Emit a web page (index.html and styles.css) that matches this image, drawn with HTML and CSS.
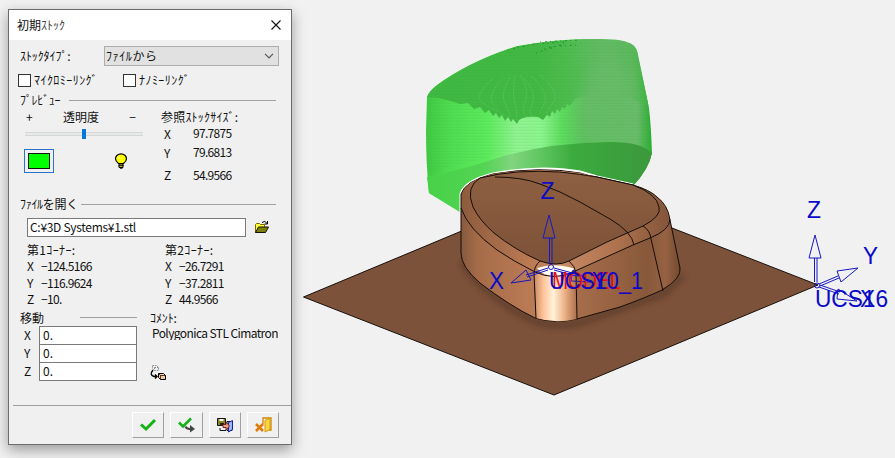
FILE: index.html
```html
<!DOCTYPE html>
<html lang="ja">
<head>
<meta charset="utf-8">
<title>初期ｽﾄｯｸ</title>
<link rel="stylesheet" href="styles.css">
</head>
<body>
<main class="workspace">
  <section class="dialog">
    <header class="titlebar">
      <h1 class="title">初期<span class="title-kana">ｽﾄｯｸ</span></h1>
      <svg class="close" viewBox="0 0 10 10"><path d="M0.5.5l9 9M9.5.5l-9 9"/></svg>
    </header>

    <div class="type-row">
      <label class="type-label">ｽﾄｯｸﾀｲﾌﾟ:</label>
      <div class="select"><span>ﾌｧｲﾙから</span>
        <svg class="chevron" viewBox="0 0 10 6"><path d="M1 .8l4 4 4-4"/></svg>
      </div>
    </div>
    <div class="check-row">
      <label class="check check-micro"><i class="box"></i><span>ﾏｲｸﾛﾐｰﾘﾝｸﾞ</span></label>
      <label class="check"><i class="box"></i><span>ﾅﾉﾐｰﾘﾝｸﾞ</span></label>
    </div>

    <div class="group-head head-preview"><span class="tight">ﾌﾟﾚﾋﾞｭｰ</span><hr></div>
    <div class="preview">
      <div class="preview-left">
        <div class="opacity-row"><span>+</span><span>透明度</span><span>−</span></div>
        <div class="slider"><i class="thumb"></i></div>
        <div class="preview-tools">
          <div class="swatch"><i></i></div>
          <svg class="bulb" viewBox="0 0 14 16">
            <path d="M4.5 10.5C2.500 9 1.500 7.500 1.500 5.800a5.500 5 0 0 1 11 0c0 1.700-1 3.200-3 4.700z" fill="#ff0" stroke="#000" stroke-width="1.200"/>
            <path d="M5 11h4v3.500H5z" fill="#e8e85a" stroke="#000"/><path d="M4.500 12.700h5M6 15.200h2.500" stroke="#000"/><path d="M4 5.500l1.500-2" stroke="#fff"/>
          </svg>
        </div>
      </div>
      <div class="preview-right">
        <div class="size-title">参照ｽﾄｯｸｻｲｽﾞ:</div>
        <div class="size"><b>X</b><span>97.7875</span></div>
        <div class="size"><b>Y</b><span>79.6813</span></div>
        <div class="size"><b>Z</b><span>54.9566</span></div>
      </div>
    </div>

    <div class="group-head head-file"><span>ﾌｧｲﾙを開く</span><hr></div>
    <div class="file-row">
      <div class="field path">C:¥3D Systems¥1.stl</div>
      <svg class="folder" viewBox="0 0 16 14">
        <path d="M8 2.500q3-2.500 5 .8M13.500 1v3h-3" fill="none" stroke="#000"/>
        <path d="M1.500 12.500V4.500l1-1h3l1 1h4v3" fill="#ffff38" stroke="#806000"/>
        <path d="M1.500 12.500l3-5.500h10l-3 5.500z" fill="#808000" stroke="#111"/>
      </svg>
    </div>
    <div class="corners">
      <div class="corner">
        <div class="corner-title">第1ｺｰﾅｰ:</div>
        <div class="coord"><b>X</b><span>−124.5166</span></div>
        <div class="coord"><b>Y</b><span>−116.9624</span></div>
        <div class="coord"><b>Z</b><span>−10.</span></div>
      </div>
      <div class="corner">
        <div class="corner-title">第2ｺｰﾅｰ:</div>
        <div class="coord"><b>X</b><span>−26.7291</span></div>
        <div class="coord"><b>Y</b><span>−37.2811</span></div>
        <div class="coord"><b>Z</b><span>44.9566</span></div>
      </div>
    </div>

    <div class="move">
      <div class="move-left">
        <div class="group-head head-move"><span>移動</span><hr></div>
        <div class="axis"><b>X</b><div class="field">0.</div></div>
        <div class="axis"><b>Y</b><div class="field">0.</div></div>
        <div class="axis"><b>Z</b><div class="field">0.</div></div>
      </div>
      <div class="comment">
        <div class="comment-title">ｺﾒﾝﾄ:</div>
        <div class="comment-text">Polygonica STL Cimatron</div>
        <svg class="transfer" viewBox="0 0 17 17">
          <path d="M2.500 1.500h4l2 2v3h-4l-2-2zM4.500 3.500h4M4.500 3.500v3" fill="none" stroke="#888" stroke-dasharray="1.500 1"/>
          <path d="M3 6Q-1 11 4 12.500h3M5 10.500l2 2-2 2" fill="none" stroke="#000" stroke-width="1.400"/>
          <path d="M8.500 9.500h5l2 2v4h-5l-2-2z" fill="#f4c9a0" stroke="#000"/><path d="M8.500 9.500l2 2h5M10.500 11.500v4" fill="none" stroke="#000" stroke-width=".7"/>
        </svg>
      </div>
    </div>

    <footer class="actions">
      <div class="btn"><svg viewBox="0 0 20 16"><path d="M3 7.500l5 4.500 9-9" fill="none" stroke="#12b312" stroke-width="3"/></svg></div>
      <div class="btn"><svg viewBox="0 0 20 16"><path d="M3 5.500l4 4L15 1.500" fill="none" stroke="#16b01c" stroke-width="2.600"/><path d="M9.500 9.500q1 3 6 2.500" fill="none" stroke="#444" stroke-width="2.200"/><path d="M14 8l5 4-5 3.500z" fill="#444"/></svg></div>
      <div class="btn"><svg viewBox="0 0 20 16">
        <path d="M2.500 1.500h8v7h-8z" fill="#8a8520" stroke="#111"/><path d="M4.500 2h4v2h-4z" fill="#fff"/><path d="M5 6h4v3H5z" fill="#222"/>
        <path d="M12 4.500h5v9h-5z" fill="#fff" stroke="#111"/><path d="M13.500 5.500l4-2v9l-4 2.500z" fill="#9ab4ff" stroke="#1720a0"/>
        <path d="M5 11v2.500h6" fill="none" stroke="#111"/><path d="M8 7.500h3V5l3.500 4-3.500 4v-2.500H8z" fill="#f0a080" stroke="#722"/>
      </svg></div>
      <div class="btn"><svg viewBox="0 0 20 16">
        <path d="M10 7V1h8v12h-2" fill="none" stroke="#d08400" stroke-width="1.300"/><path d="M12 3.500l5-2.300v11.300L12 15z" fill="#ffd53b" stroke="#d59a10"/>
        <path d="M3 7l7 7M10 7l-7 7" stroke="#e07a08" stroke-width="2.600"/>
      </svg></div>
    </footer>
  </section>

  <svg class="scene" viewBox="292 0 603 458">
    <defs>
      <linearGradient id="green" gradientUnits="userSpaceOnUse" x1="427" y1="0" x2="652" y2="0">
        <stop offset="0" stop-color="#40c943"/><stop offset=".1" stop-color="#50dc50"/><stop offset=".27" stop-color="#5deb5d"/><stop offset=".4" stop-color="#91f491"/><stop offset=".51" stop-color="#8cf58c"/><stop offset=".6" stop-color="#5edc5f"/><stop offset=".7" stop-color="#5cc45c"/><stop offset=".93" stop-color="#6cbc6c"/><stop offset="1" stop-color="#2aae30"/>
      </linearGradient>
      <linearGradient id="greenTop" gradientUnits="userSpaceOnUse" x1="427" y1="90" x2="650" y2="80">
        <stop offset="0" stop-color="#3fb941"/><stop offset=".5" stop-color="#43b843"/><stop offset=".65" stop-color="#4fbd50"/><stop offset=".8" stop-color="#66bb66"/><stop offset=".93" stop-color="#5cb95d"/><stop offset="1" stop-color="#35b73a"/>
      </linearGradient>
      <linearGradient id="greenBase" gradientUnits="userSpaceOnUse" x1="427" y1="0" x2="652" y2="0">
        <stop offset="0" stop-color="#48d148"/><stop offset=".25" stop-color="#53d453"/><stop offset=".38" stop-color="#80d47e"/><stop offset=".5" stop-color="#61c761"/><stop offset=".65" stop-color="#3bab3e"/><stop offset="1" stop-color="#3c983c"/>
      </linearGradient>
      <linearGradient id="side" gradientUnits="userSpaceOnUse" x1="461" y1="0" x2="681" y2="0">
        <stop offset="0" stop-color="#87593e"/><stop offset=".08" stop-color="#a66c49"/><stop offset=".33" stop-color="#bb7b55"/><stop offset=".53" stop-color="#a66d4a"/><stop offset=".85" stop-color="#88583b"/><stop offset=".93" stop-color="#966243"/><stop offset="1" stop-color="#70482f"/>
      </linearGradient>
      <linearGradient id="front" gradientUnits="userSpaceOnUse" x1="534" y1="0" x2="577" y2="0">
        <stop offset="0" stop-color="#c98961"/><stop offset=".22" stop-color="#ffc39a"/><stop offset=".45" stop-color="#fff2d8"/><stop offset=".7" stop-color="#f0b48b"/><stop offset="1" stop-color="#a96e4b"/>
      </linearGradient>
      <linearGradient id="lid" x1="0" y1="0" x2="0" y2="1"><stop offset="0" stop-color="#8e5f42"/><stop offset="1" stop-color="#7d5238"/></linearGradient>
      <linearGradient id="rim" gradientUnits="userSpaceOnUse" x1="461" y1="0" x2="670" y2="0"><stop offset="0" stop-color="#8c5b3d"/><stop offset=".35" stop-color="#bd7c55"/><stop offset=".5" stop-color="#c58a65"/><stop offset=".75" stop-color="#ad724d"/><stop offset="1" stop-color="#82543a"/></linearGradient>
      <pattern id="weave" width="3" height="3" patternUnits="userSpaceOnUse"><path d="M0 1.500q1.500-1 3 0" fill="none" stroke="#22922b" stroke-width=".5" opacity=".22"/></pattern>
      <filter id="soft" x="-20%" y="-20%" width="140%" height="140%"><feGaussianBlur stdDeviation="3"/></filter>
      <filter id="softer" x="-40%" y="-40%" width="180%" height="180%"><feGaussianBlur stdDeviation="7"/></filter>
      <clipPath id="stockClip"><path d="M427 97Q429 91 437 85Q470 61 517 46Q560 38 600 39Q625 39 633 45Q637 48 638 55L649 108Q651 125 652 153Q649 169 633 186L600 200 460 212 429 193Q426 165 426 130z"/></clipPath>
    </defs>

    <!-- Transparent stock preview -->
    <path fill="url(#green)" d="M427 97Q429 91 437 85Q470 61 517 46Q560 38 600 39Q625 39 633 45Q637 48 638 55L649 108Q651 125 652 153Q649 169 633 186L600 200 460 212 429 193Q426 165 426 130z"/>
    <g clip-path="url(#stockClip)">
      <path fill="url(#greenTop)" d="M427 97Q429 91 437 85Q470 61 517 46Q560 38 600 39Q625 39 633 45Q637 48 638 55L649 106Q620 90 604 105Q590 92 575 99L570 106 567 104 565 109 562 107 560 112 557 109 555 114 552 111 550 117 547 115 543 120 538 117Q525 116 519 120L517 124 513 119 511 122 508 117 505 121 502 115 499 118 496 113 493 116 489 110 485 113 480 107 474 109 468 103 460 104Q440 97 427 97z"/>
      <path fill="#69bc69" opacity=".85" filter="url(#softer)" d="M596 65Q622 50 632 80L638 139Q620 136 583 141Q570 113 596 65z"/>
      <path fill="url(#weave)" d="M427 97Q470 61 517 46L600 39 633 45 649 108Q650 130 652 145 630 140 600 142 500 150 428 174z"/>
    </g>
    <path fill="url(#greenBase)" d="M427 177Q470 168 503 156Q550 143 607 142Q640 141 652 153Q649 169 633 186L600 200 460 212 429 193z"/>
    <g class="contours">
      <path d="M520 75q10 15 5 27t5 16M524 79q13 13 8 26t6 13M515 76q-3 15 0 27t1 17M510 78q-10 15-5 25t5 15M502 79q-13 15-10 23t14 14M493 79q-14 12-14 18t18 14M531 76q16 14 14 25l-6 14M540 75q17 14 15 25l-9 13"/>
    </g>
    <path class="speckles" d="M508 50l26-6 30-2M536 53l22-7 20-1M544 49l20-5M540 42l40-2"/>

    <!-- Base plate and model -->
    <path class="plate" d="M303.500 297L567 187 818 285 554 395z"/>
    <path d="M462 262Q481 294 536 322Q558 328 580 323L663 294 683 276" fill="none" stroke="#3e281b" stroke-width="5" opacity=".55" filter="url(#soft)"/>
    <path class="halo" d="M461 212V194Q465 181 493 174Q540 165 580 172L597 177 633 185"/>
    <path id="body" fill="url(#side)" stroke="#150d08" d="M461 207V194Q465 181 493 174Q540 166 580 173Q589 176 597 177L633 185Q650 190 657 197Q668 205 670 220L680 268Q682 278 662 290Q645 298 620 307L577 319Q555 324 535 318Q510 306 480 283Q461 267 461 253z"/>
    <path fill="url(#rim)" d="M462 206V194Q465 181 493 174Q540 167 580 173L633 186Q665 196 669 219Q668 230 650 238L633 245 573 272Q555 281 535 272Q511 260 497 250Q468 230 462 206z"/>
    <path fill="url(#front)" d="M535 272Q555 279 576 272L577 319Q555 324 536 318z"/>
    <path fill="#fffdf1" d="M537 268Q555 262 575 269Q566 276 555 276Q543 276 537 268z"/>
    <path fill="url(#lid)" stroke="#150d08" d="M480 178Q465 187 473 207Q480 221 494 233Q515 250 540 261Q557 267 569 261L607 242 643 226Q662 216 659 207Q657 194 633 185L597 177Q580 174 560 172Q515 169 480 178z"/>
    <g class="edges">
      <path d="M461 208Q468 229 497 250Q513 261 535 272Q555 281 573 272L633 245 650 238Q670 230 670 219"/>
      <path d="M495 177Q522 177 540 184Q560 191 580 202L610 219Q632 232 634 245M643 226Q650 230 651 239L663 291M540 261Q534 266 534 274L536 318M569 261Q575 266 576 273L577 319"/>
    </g>

    <!-- Coordinate systems -->
    <g class="axes">
      <circle cx="551" cy="267" r="2.500"/>
      <path d="M549.500 264V238M552 264V238M543 238h12l-6-23zM548 268l-22 7M548 270l-21 7M511 283l15-13 5 10zM554 268l22 6M554 270l22 6M573 270l18 12-20-1z"/>
      <circle cx="817" cy="285.500" r="2.500"/>
      <path d="M814.500 282V258M817 282V258M809 258h12l-6-23zM819 284l19-8M820 286l19-8M837 271l21-3-17 14zM819 287l20 7M820 285l20 7M838 289l19 12-20-2z"/>
    </g>
    <g class="marks">
      <text x="540.500" y="199" textLength="14" lengthAdjust="spacingAndGlyphs">Z</text>
      <text x="489" y="289" textLength="15" lengthAdjust="spacingAndGlyphs">X</text>
      <text class="model-mark" x="552" y="289" textLength="79" lengthAdjust="spacingAndGlyphs">MODEL_</text>
      <text x="549" y="289" textLength="94" lengthAdjust="spacingAndGlyphs">UCS10_1</text>
      <text x="592" y="289" textLength="15" lengthAdjust="spacingAndGlyphs">Y</text>
      <text x="807" y="218" textLength="14" lengthAdjust="spacingAndGlyphs">Z</text>
      <text x="863" y="264" textLength="15" lengthAdjust="spacingAndGlyphs">Y</text>
      <text x="815" y="307" textLength="73" lengthAdjust="spacingAndGlyphs">UCS16</text>
      <text x="860" y="307" textLength="15" lengthAdjust="spacingAndGlyphs">X</text>
    </g>
  </svg>
</main>
</body>
</html>
```
FILE: styles.css
```css
* { box-sizing: border-box; }
body { margin: 0; background: #f1f1f1; font: 12px/16px "Noto Sans CJK JP", sans-serif; color: #111; overflow: hidden; }
.workspace { display: flex; width: 895px; height: 458px; }
.dialog { flex: none; z-index: 1; margin: 9px 0 0 8px; width: 284px; height: 436px; border: 1px solid #6c6c6c; background: #f0f0f0; box-shadow: 0 5px 13px rgba(0,0,0,.36); white-space: nowrap; }
.scene { flex: none; width: 603px; height: 458px; display: block; }

.titlebar { display: flex; justify-content: space-between; align-items: center; height: 30px; background: #fff; padding: 0 10px 0 8px; }
.title { margin: 0; font-size: 12px; font-weight: 400; }
.title-kana { color: #444; }
.close { width: 10px; height: 10px; }
.close path { stroke: #111; stroke-width: 1.1; }

.type-row { display: flex; align-items: center; height: 20px; margin: 6px 12px 0 11px; }
.type-label { width: 84px; letter-spacing: -.1px; }
.select { display: flex; align-items: center; justify-content: space-between; width: 175px; height: 20px; padding: 0 4px 0 1px; border: 1px solid #adadad; background: #e1e1e1; letter-spacing: .6px; }
.chevron { width: 10px; height: 6px; }
.chevron path { fill: none; stroke: #555; stroke-width: 1.2; }

.check-row { display: flex; height: 16px; margin: 6px 0 0 9px; letter-spacing: .45px; }
.check { display: flex; align-items: center; gap: 3px; }
.check-micro { width: 105px; }
.box { width: 13px; height: 13px; border: 1px solid #333; background: #fff; }

.group-head { display: flex; align-items: center; height: 16px; }
.group-head hr { flex: 1; height: 1px; margin: 0; border: 0; background: #a0a0a0; }
.head-preview { margin: 4px 15px 0 11px; gap: 9px; }
.tight { letter-spacing: -.4px; }

.preview { display: flex; margin-top: 1px; height: 87px; }
.preview-left { width: 118px; margin-left: 16px; }
.opacity-row { display: flex; justify-content: space-between; padding: 0 7px 0 1px; height: 16px; }
.slider { display: flex; align-items: center; justify-content: center; height: 10px; margin-top: 4px; background: linear-gradient(#d6d6d6 1px, #e7eaea 1px 3px, #d6d6d6 3px) center / 100% 4px no-repeat; }
.thumb { width: 4px; height: 10px; background: #0078d7; }
.preview-tools { display: flex; align-items: center; justify-content: space-between; margin: 10px 15px 0 -1px; height: 24px; }
.swatch { width: 30px; height: 24px; padding: 3px; border: 1px solid #2874c7; }
.swatch i { display: block; width: 22px; height: 16px; background: #0f0; border: 1px solid #111; }
.bulb { width: 14px; height: 16px; fill: none; }
.preview-right { margin-left: 18px; }
.size-title { height: 16px; letter-spacing: .2px; }
.size { display: flex; height: 22px; align-items: center; padding-left: 3px; }
.size:nth-child(2) { height: 16px; }
.size:nth-child(4) { height: 23px; }
.size b { width: 29px; font-weight: 400; padding-top: 1px; }
.size span { letter-spacing: -.7px; }

.head-file { margin: 0 15px 0 11px; gap: 3px; }
.head-file span { letter-spacing: -.3px; }
.file-row { display: flex; align-items: center; height: 18px; margin: 6px 0 0 18px; gap: 8px; }
.field { height: 19px; border: 1px solid #7a7a7a; background: #fff; padding-left: 3px; line-height: 16px; }
.path { width: 219px; letter-spacing: -.3px; padding-left: 2px; }
.folder { width: 16px; height: 14px; }

.corners { display: flex; margin: 6px 0 0 18px; }
.corner { flex: none; width: 138px; }
.corner + .corner { width: 112px; }
.corner-title { height: 16px; letter-spacing: .35px; }
.coord { display: flex; height: 16.500px; }
.coord b { width: 14px; font-weight: 400; }
.coord span { letter-spacing: -.65px; }

.move { display: flex; height: 86px; margin-top: 2px; padding-left: 11px; }
.move-left { width: 117px; }
.head-move { gap: 36px; height: 16px; }
.axis { display: flex; height: 18px; }
.axis b { width: 19px; padding: 1px 0 0 4px; font-weight: 400; }
.axis .field { width: 98px; height: 19px; }
.comment { margin-left: 13px; width: 128px; }
.comment-title { height: 15px; line-height: 15px; letter-spacing: -.1px; }
.comment-text { width: 128px; padding-left: 2px; overflow: hidden; letter-spacing: -.6px; line-height: 15px; }
.transfer { display: block; width: 17px; height: 17px; margin-top: 24px; }

.actions { display: flex; gap: 6px; margin: 9px 0 0 4px; padding: 6px 0 0 119px; border-top: 1px solid #a0a0a0; }
.btn { display: flex; align-items: center; justify-content: center; width: 32.300px; height: 26px; border: 1px solid #fff; border-right-color: #a0a0a0; border-bottom-color: #a0a0a0; }
.btn svg { width: 20px; height: 16px; }

.plate { fill: #7d523a; stroke: #16100c; stroke-width: 1; }
.halo { fill: none; stroke: #fff; stroke-width: 3; }
.contours { fill: none; stroke: #76dc76; stroke-width: .7; stroke-dasharray: 2 1; opacity: .5; }
.speckles { fill: none; stroke: #18852a; stroke-width: 1; stroke-dasharray: 1 4 2 3; opacity: .8; }
.edges { fill: none; stroke: #150d08; stroke-width: 1; }
.axes { fill: none; stroke: #1717c2; stroke-width: 1; }
.marks { fill: #0a0ac8; font: 24px "Liberation Sans", sans-serif; }
.marks .model-mark { fill: #e80c18; }
```
